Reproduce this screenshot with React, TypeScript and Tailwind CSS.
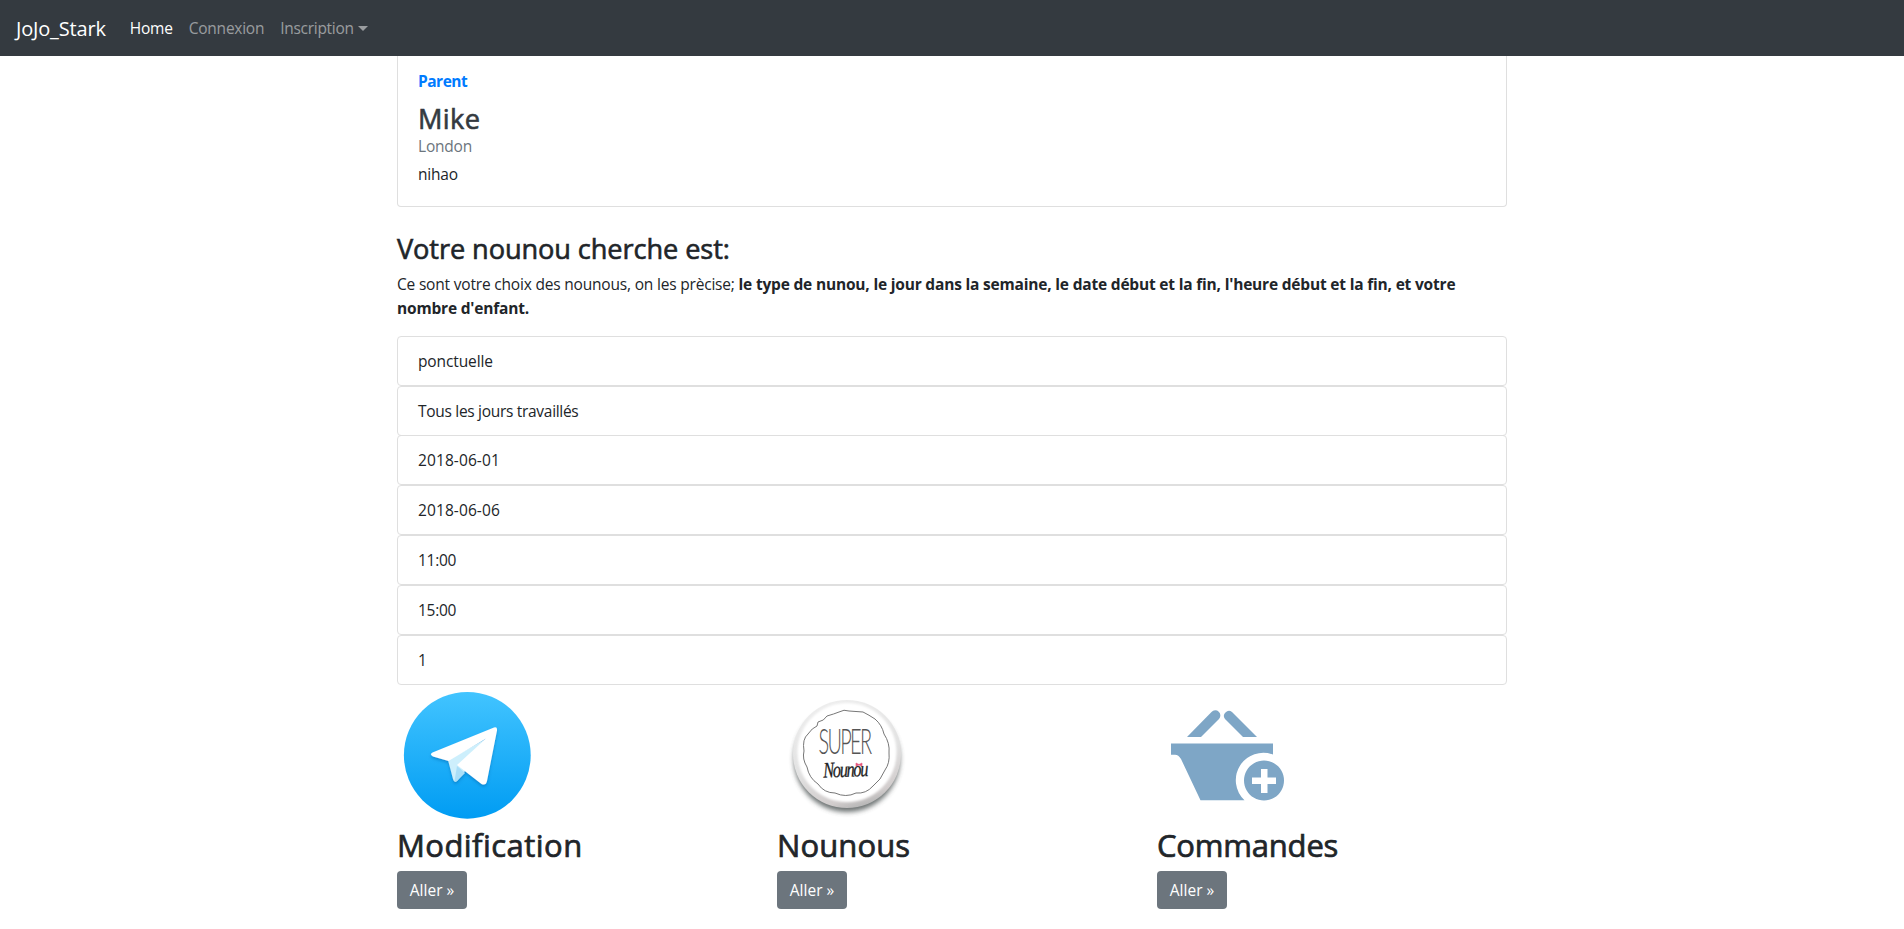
const wishes = [
  { text: 'ponctuelle', cls: 'tracking-[-0.12px]' },
  { text: 'Tous les jours travaillés', cls: 'tracking-[-0.3px]' },
  { text: '2018-06-01', cls: '-mt-px tracking-[0.1px]' },
  { text: '2018-06-06', cls: 'tracking-[0.1px]' },
  { text: '11:00', cls: 'tracking-[-0.3px]' },
  { text: '15:00', cls: 'tracking-[-0.3px]' },
  { text: '1', cls: '' },
];

function PlaneIcon() {
  return (
    <svg viewBox="0 0 140 140" className="block size-[140px]">
      <defs>
        <linearGradient id="sky" x1="0" y1="0" x2="0" y2="1">
          <stop offset="0" stopColor="#42c4ff" />
          <stop offset="1" stopColor="#009cf3" />
        </linearGradient>
        <filter id="planeShadow" x="-20%" y="-20%" width="140%" height="150%">
          <feDropShadow dx="0" dy="2" stdDeviation="1.6" floodColor="#0069b0" floodOpacity="0.5" />
        </filter>
      </defs>
      <circle cx="70.3" cy="70.3" r="63.4" fill="url(#sky)" />
      <g filter="url(#planeShadow)">
        <path d="M51 75 L96 50 L64 80 L68 86 L60 96 Q57 98 56 94 Z" fill="#cdeffc" />
        <path d="M60 81 L68 88 L60 96 Q58 97 57.5 96 Z" fill="#a9def8" />
        <path d="M35.5 67.5 L97 42.6 Q100.5 41.5 100 45.5 L90 96 Q89 101 84.500 99 L60 80 L89 53.500 L51.500 76 L36 71.500 Q32 69.500 35.500 67.500 Z" fill="#fff" />
      </g>
    </svg>
  );
}

function BadgeIcon() {
  return (
    <svg viewBox="0 0 140 140" className="block size-[140px]">
      <defs>
        <linearGradient id="rim" x1="0.3" y1="0" x2="0.6" y2="1">
          <stop offset="0" stopColor="#eeeeee" />
          <stop offset="0.55" stopColor="#e2e2e2" />
          <stop offset="0.9" stopColor="#d2cdcd" />
          <stop offset="1" stopColor="#b5b5b5" />
        </linearGradient>
        <filter id="soft" x="-20%" y="-20%" width="140%" height="140%">
          <feGaussianBlur stdDeviation="2.6" />
        </filter>
        <filter id="rimSoft" x="-20%" y="-20%" width="140%" height="140%">
          <feGaussianBlur stdDeviation="1.2" />
        </filter>
      </defs>
      <circle cx="70" cy="74" r="53" fill="#3d4444" opacity="0.75" filter="url(#soft)" />
      <circle cx="70" cy="69" r="54" fill="url(#rim)" />
      <circle cx="70" cy="67.500" r="49.500" fill="#fff" filter="url(#rimSoft)" />
      <path
        d="M41 37 Q47 36 50 31 Q57 29 62 27 Q67 24 72 26 L86 27 Q92 30 98 34 Q105 40 107 49 Q113 58 112 68 Q113 78 108 85 Q104 95 96 101 Q89 109 79 108 Q69 113 58 108 Q47 108 41 99 Q32 93 30 82 Q25 74 27 66 Q25 54 31 49 Q35 43 40 41 Z"
        fill="#fff" stroke="#777" strokeWidth="1"
      />
      <text transform="translate(41.5 69) scale(0.57 1)" textLength="94" fontSize="35" fontWeight="300" fontFamily="Lato, sans-serif" fill="#555">SUPER</text>
      <text transform="translate(46.500 92.500) rotate(-2) scale(0.74 1)" textLength="61" fontSize="22" fontStyle="italic" fontFamily="'Liberation Serif', serif" fill="#222" stroke="#222" strokeWidth="0.3">Nounou</text>
      <path d="M79 78 l3 1.500 3 -1.500 v3 l-3 -1 -3 1 Z" fill="#e4557c" stroke="#e4557c" strokeWidth="0.6" />
    </svg>
  );
}

function BasketIcon() {
  return (
    <svg viewBox="0 0 140 140" className="block size-[140px]" fill="#7ea6c6">
      <path d="M30 52 L54.500 27 A5 5 0 0 1 62 34 L44 52 Z" />
      <path d="M100 52 L75 27 A5 5 0 0 0 68 34 L86 52 Z" />
      <path d="M14 58.500 H116 V69.500 A27.500 27.500 0 0 0 87.500 115.300 H43.500 L24 74 Q21.500 69.700 18 69.700 H14 Z" />
      <path fillRule="evenodd" d="M107 75.500 a20 20 0 1 0 0.010 0 Z M104 84 h6.500 v8.500 h8.500 v6.500 h-8.500 v9 h-6.500 v-9 h-9 v-6.500 h9 Z" />
    </svg>
  );
}

const features = [
  { title: 'Modification', cls: 'tracking-[0.45px]', Icon: PlaneIcon },
  { title: 'Nounous', cls: 'tracking-[0.1px]', Icon: BadgeIcon },
  { title: 'Commandes', cls: 'tracking-[-0.2px]', Icon: BasketIcon },
];

export default function App() {
  return (
    <div className="h-[929px] overflow-hidden bg-white font-['Open_Sans',sans-serif] text-[15.5px] leading-6 text-[#212529]">
      <nav className="flex h-14 items-center bg-[#343a40] px-4 text-white/50">
        <a className="mr-4 pt-px text-[20px] leading-[30px] tracking-[-0.17px] text-white">JoJo_Stark</a>
        <a className="px-2 tracking-[-0.2px] text-white">Home</a>
        <a className="px-2 tracking-[-0.25px]">Connexion</a>
        <a className="flex items-center px-2 tracking-[-0.28px]">
          Inscription
          <span className="ml-1 border-x-[5px] border-t-[5px] border-x-transparent border-t-white/50" />
        </a>
      </nav>

      <main className="mx-auto w-[1110px]">
        <section className="rounded-b border border-t-0 border-[#dfdfdf] px-5 pt-[13px] pb-5">
          <strong className="mb-[9px] block font-bold tracking-[-0.5px] text-[#007bff]">Parent</strong>
          <h3 className="-mb-px text-[27.2px] leading-[33px] tracking-[0.4px] text-[#343a40] [-webkit-text-stroke:0.6px]">Mike</h3>
          <div className="mb-1 tracking-[-0.2px] text-[#6c757d]">London</div>
          <p className="tracking-[-0.2px]">nihao</p>
        </section>

        <h3 className="mt-[25px] mb-[7px] text-[27.2px] leading-[33px] tracking-[-0.1px] [-webkit-text-stroke:0.6px]">Votre nounou cherche est:</h3>
        <p className="mb-4 tracking-[-0.19px]">
          Ce sont votre choix des nounous, on les prècise;{' '}
          <strong className="font-bold">
            le type de nunou, le jour dans la semaine, le date début et la fin, l'heure début et la fin, et votre
            <br />
            nombre d'enfant.
          </strong>
        </p>

        {wishes.map((w) => (
          <div key={w.text} className={`flex h-[50px] items-center rounded border border-[#dfdfdf] px-5 ${w.cls}`}>
            {w.text}
          </div>
        ))}

        <div className="grid grid-cols-3 gap-x-[30px]">
          {features.map(({ title, cls, Icon }) => (
            <div key={title}>
              <Icon />
              <h2 className={`mt-px mb-[7px] text-[31px] leading-[38px] [-webkit-text-stroke:0.7px] ${cls}`}>{title}</h2>
              <button className="flex h-[38px] w-[70px] items-center justify-center rounded bg-[#6c757d] text-white">Aller »</button>
            </div>
          ))}
        </div>
      </main>
    </div>
  );
}
